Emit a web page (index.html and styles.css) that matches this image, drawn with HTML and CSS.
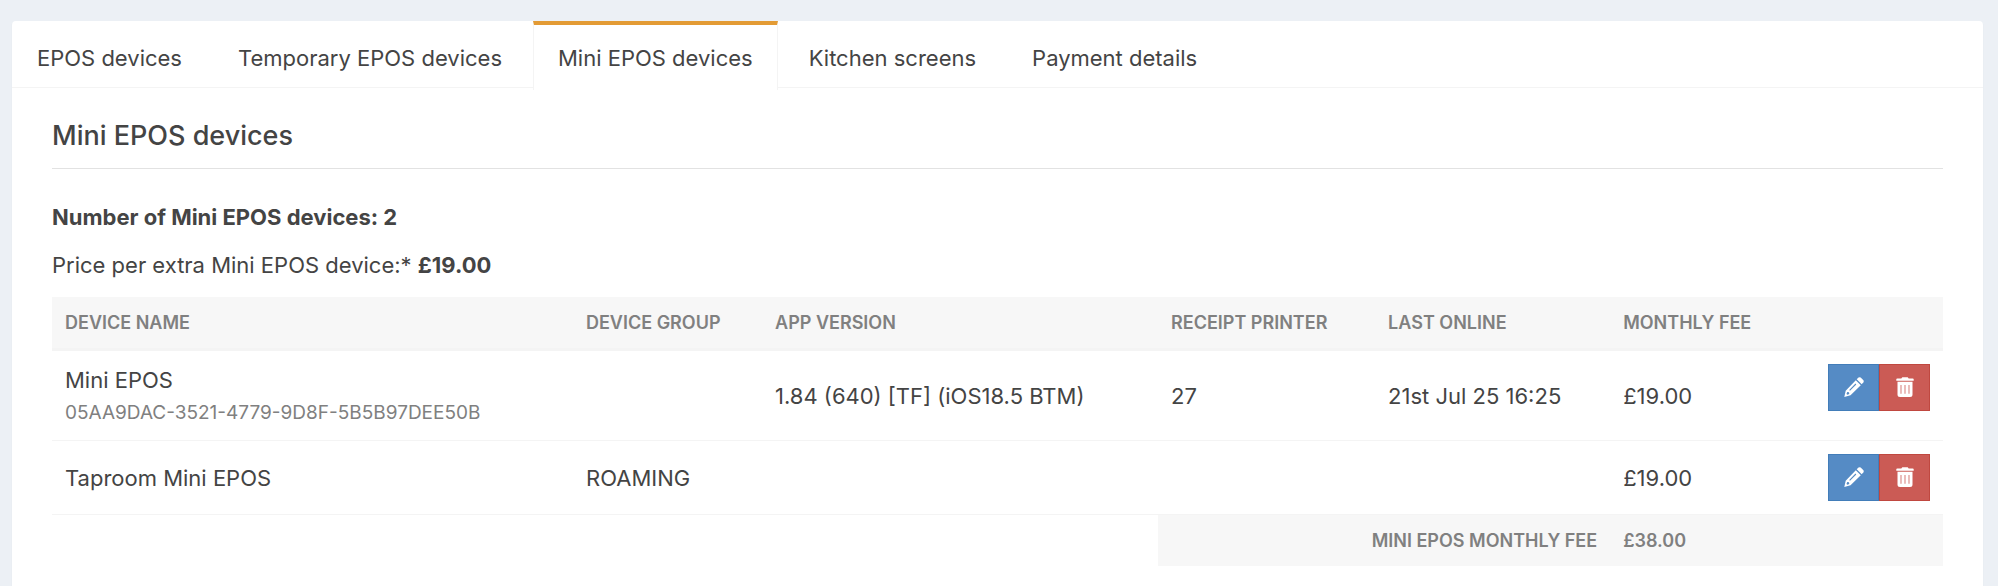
FILE: index.html
```html
<!DOCTYPE html>
<html lang="en">
<head>
<meta charset="utf-8">
<title>Mini EPOS devices</title>
<link rel="stylesheet" href="styles.css">
</head>
<body>
<svg class="sprite" aria-hidden="true">
  <symbol id="pencil" viewBox="0 0 20 20">
    <path fill-rule="evenodd" d="M11.800 3.200 16.800 8.200 6.500 18.300 .3 20 1.700 13.700ZM11.500 6.600 5.200 12.900 6 13.700 12.300 7.400ZM3.200 15 2.500 16.900 3.300 17.700 5.300 17 5 15.200Z"/>
    <path d="M12.700 2.300 14.500.6Q15.500-.2 16.700.6L19.400 3.300Q20.200 4.400 19.300 5.500L17.700 7.300Z"/>
  </symbol>
  <symbol id="trash" viewBox="0 0 18 20">
    <path d="M.3 3.700V2.200Q.3 1.400 1.300 1.400H5.300L6.300.2H11.700L12.700 1.400H16.700Q17.700 1.400 17.700 2.200V3.700Z"/>
    <path fill-rule="evenodd" d="M1.500 4.800H16.500V17.500Q16.500 20 14 20H4Q1.500 20 1.500 17.500ZM4.600 8V16.800H5.400V8ZM8.600 8V16.800H9.400V8ZM12.600 8V16.800H13.400V8Z"/>
  </symbol>
</svg>
<main class="card">
  <nav class="tabs">
    <a class="tab" href="#epos">EPOS devices</a>
    <a class="tab" href="#temporary">Temporary EPOS devices</a>
    <a class="tab active" href="#mini" aria-current="page">Mini EPOS devices</a>
    <a class="tab" href="#kitchen">Kitchen screens</a>
    <a class="tab" href="#payment">Payment details</a>
  </nav>
  <section class="panel">
    <h1 class="title">Mini EPOS devices</h1>
    <p class="summary"><strong>Number of Mini EPOS devices: 2</strong></p>
    <p class="summary">Price per extra Mini EPOS device:* <strong>£19.00</strong></p>
    <table class="devices">
      <colgroup>
        <col class="col-name"><col class="col-group"><col class="col-version"><col class="col-printer"><col class="col-online"><col class="col-fee"><col class="col-actions">
      </colgroup>
      <thead>
        <tr><th scope="col">DEVICE NAME</th><th scope="col">DEVICE GROUP</th><th scope="col">APP VERSION</th><th scope="col">RECEIPT PRINTER</th><th scope="col">LAST ONLINE</th><th scope="col">MONTHLY FEE</th><td></td></tr>
      </thead>
      <tbody>
        <tr>
          <td>Mini EPOS<br><small class="uuid">05AA9DAC-3521-4779-9D8F-5B5B97DEE50B</small></td>
          <td></td><td>1.84 (640) [TF] (iOS18.5 BTM)</td><td>27</td><td>21st Jul 25 16:25</td><td>£19.00</td>
          <td class="actions"><div class="buttons"><button class="btn edit" type="button" aria-label="Edit Mini EPOS"><svg class="icon"><use href="#pencil"/></svg></button><button class="btn delete" type="button" aria-label="Delete Mini EPOS"><svg class="icon"><use href="#trash"/></svg></button></div></td>
        </tr>
        <tr>
          <td>Taproom Mini EPOS</td>
          <td>ROAMING</td><td></td><td></td><td></td><td>£19.00</td>
          <td class="actions"><div class="buttons"><button class="btn edit" type="button" aria-label="Edit Taproom Mini EPOS"><svg class="icon"><use href="#pencil"/></svg></button><button class="btn delete" type="button" aria-label="Delete Taproom Mini EPOS"><svg class="icon"><use href="#trash"/></svg></button></div></td>
        </tr>
      </tbody>
      <tfoot>
        <tr><td class="blank" colspan="3"></td><th class="total-label" scope="row" colspan="2">MINI EPOS MONTHLY FEE</th><td class="total">£38.00</td><td class="total"></td></tr>
      </tfoot>
    </table>
  </section>
</main>
</body>
</html>
```
FILE: styles.css
```css
* { box-sizing: border-box; }
body {
  margin: 0;
  padding: 21px 15px 0 12px;
  min-height: 100vh;
  display: flex;
  flex-direction: column;
  background: #ecf0f5;
  color: #444;
  font: 22px/31px Inter, "Liberation Sans", sans-serif;
}
.sprite { display: none; }
.card {
  flex: 1;
  background: #fff;
  border-radius: 4px 4px 0 0;
  box-shadow: 0 1px 1px rgba(0, 0, 0, .1);
}
.tabs {
  display: flex;
  gap: 6px;
  border-bottom: 1px solid #f4f4f4;
}
.tab {
  margin-bottom: -3px;
  padding: 18px 24px 16px;
  border: solid transparent;
  border-width: 4px 1px 0;
  color: #444;
  text-decoration: none;
}
.tab.active {
  background: #fff;
  border-color: #e39b35 #f4f4f4 transparent;
}
.panel { padding: 28px 40px 20px; }
.title {
  margin: 0 0 33px;
  padding-bottom: 12px;
  border-bottom: 1px solid #e2e2e2;
  font-size: 27px;
  font-weight: 500;
  line-height: 40px;
}
.summary { margin: 0 0 17px; }
.summary + .summary { margin-bottom: 16px; }
strong { font-weight: 700; }
.devices {
  width: 100%;
  table-layout: fixed;
  border-collapse: separate;
  border-spacing: 0;
}
.col-name { width: 27.55%; }
.col-group { width: 10%; }
.col-version { width: 20.94%; }
.col-printer { width: 11.48%; }
.col-online { width: 12.43%; }
.col-fee { width: 9%; }
.devices th, .devices td {
  padding: 14px 13px 12px;
  text-align: left;
  vertical-align: middle;
}
.devices thead th, .devices thead td {
  padding: 13px 13px 12px;
  background: #f7f7f7;
  border-bottom: 3px solid #f4f4f4;
}
.devices thead th, .devices tfoot th, .devices tfoot td {
  color: #808080;
  font-size: 18px;
  font-weight: 600;
  line-height: 26px;
  white-space: nowrap;
}
.devices tfoot th, .devices tfoot td { padding: 13px 13px 12px; }
.devices tbody td { border-bottom: 1px solid #f4f4f4; }
.uuid { color: #808080; font-size: 19px; }
.devices .actions { padding: 13px; vertical-align: top; }
.buttons { display: flex; justify-content: flex-end; }
.btn {
  display: flex;
  align-items: center;
  justify-content: center;
  width: 51px;
  height: 47px;
  margin: 0;
  padding: 0 0 2px;
  border: 1px solid;
  color: #fff;
}
.edit { background: #558bc5; border-color: #427db9; }
.delete { background: #cb5b55; border-color: #c04840; }
.icon { width: 20px; height: 20px; fill: currentColor; }
.devices tfoot .total-label, .devices tfoot .total { background: #f7f7f7; }
.devices tfoot .total-label { text-align: right; }
```
